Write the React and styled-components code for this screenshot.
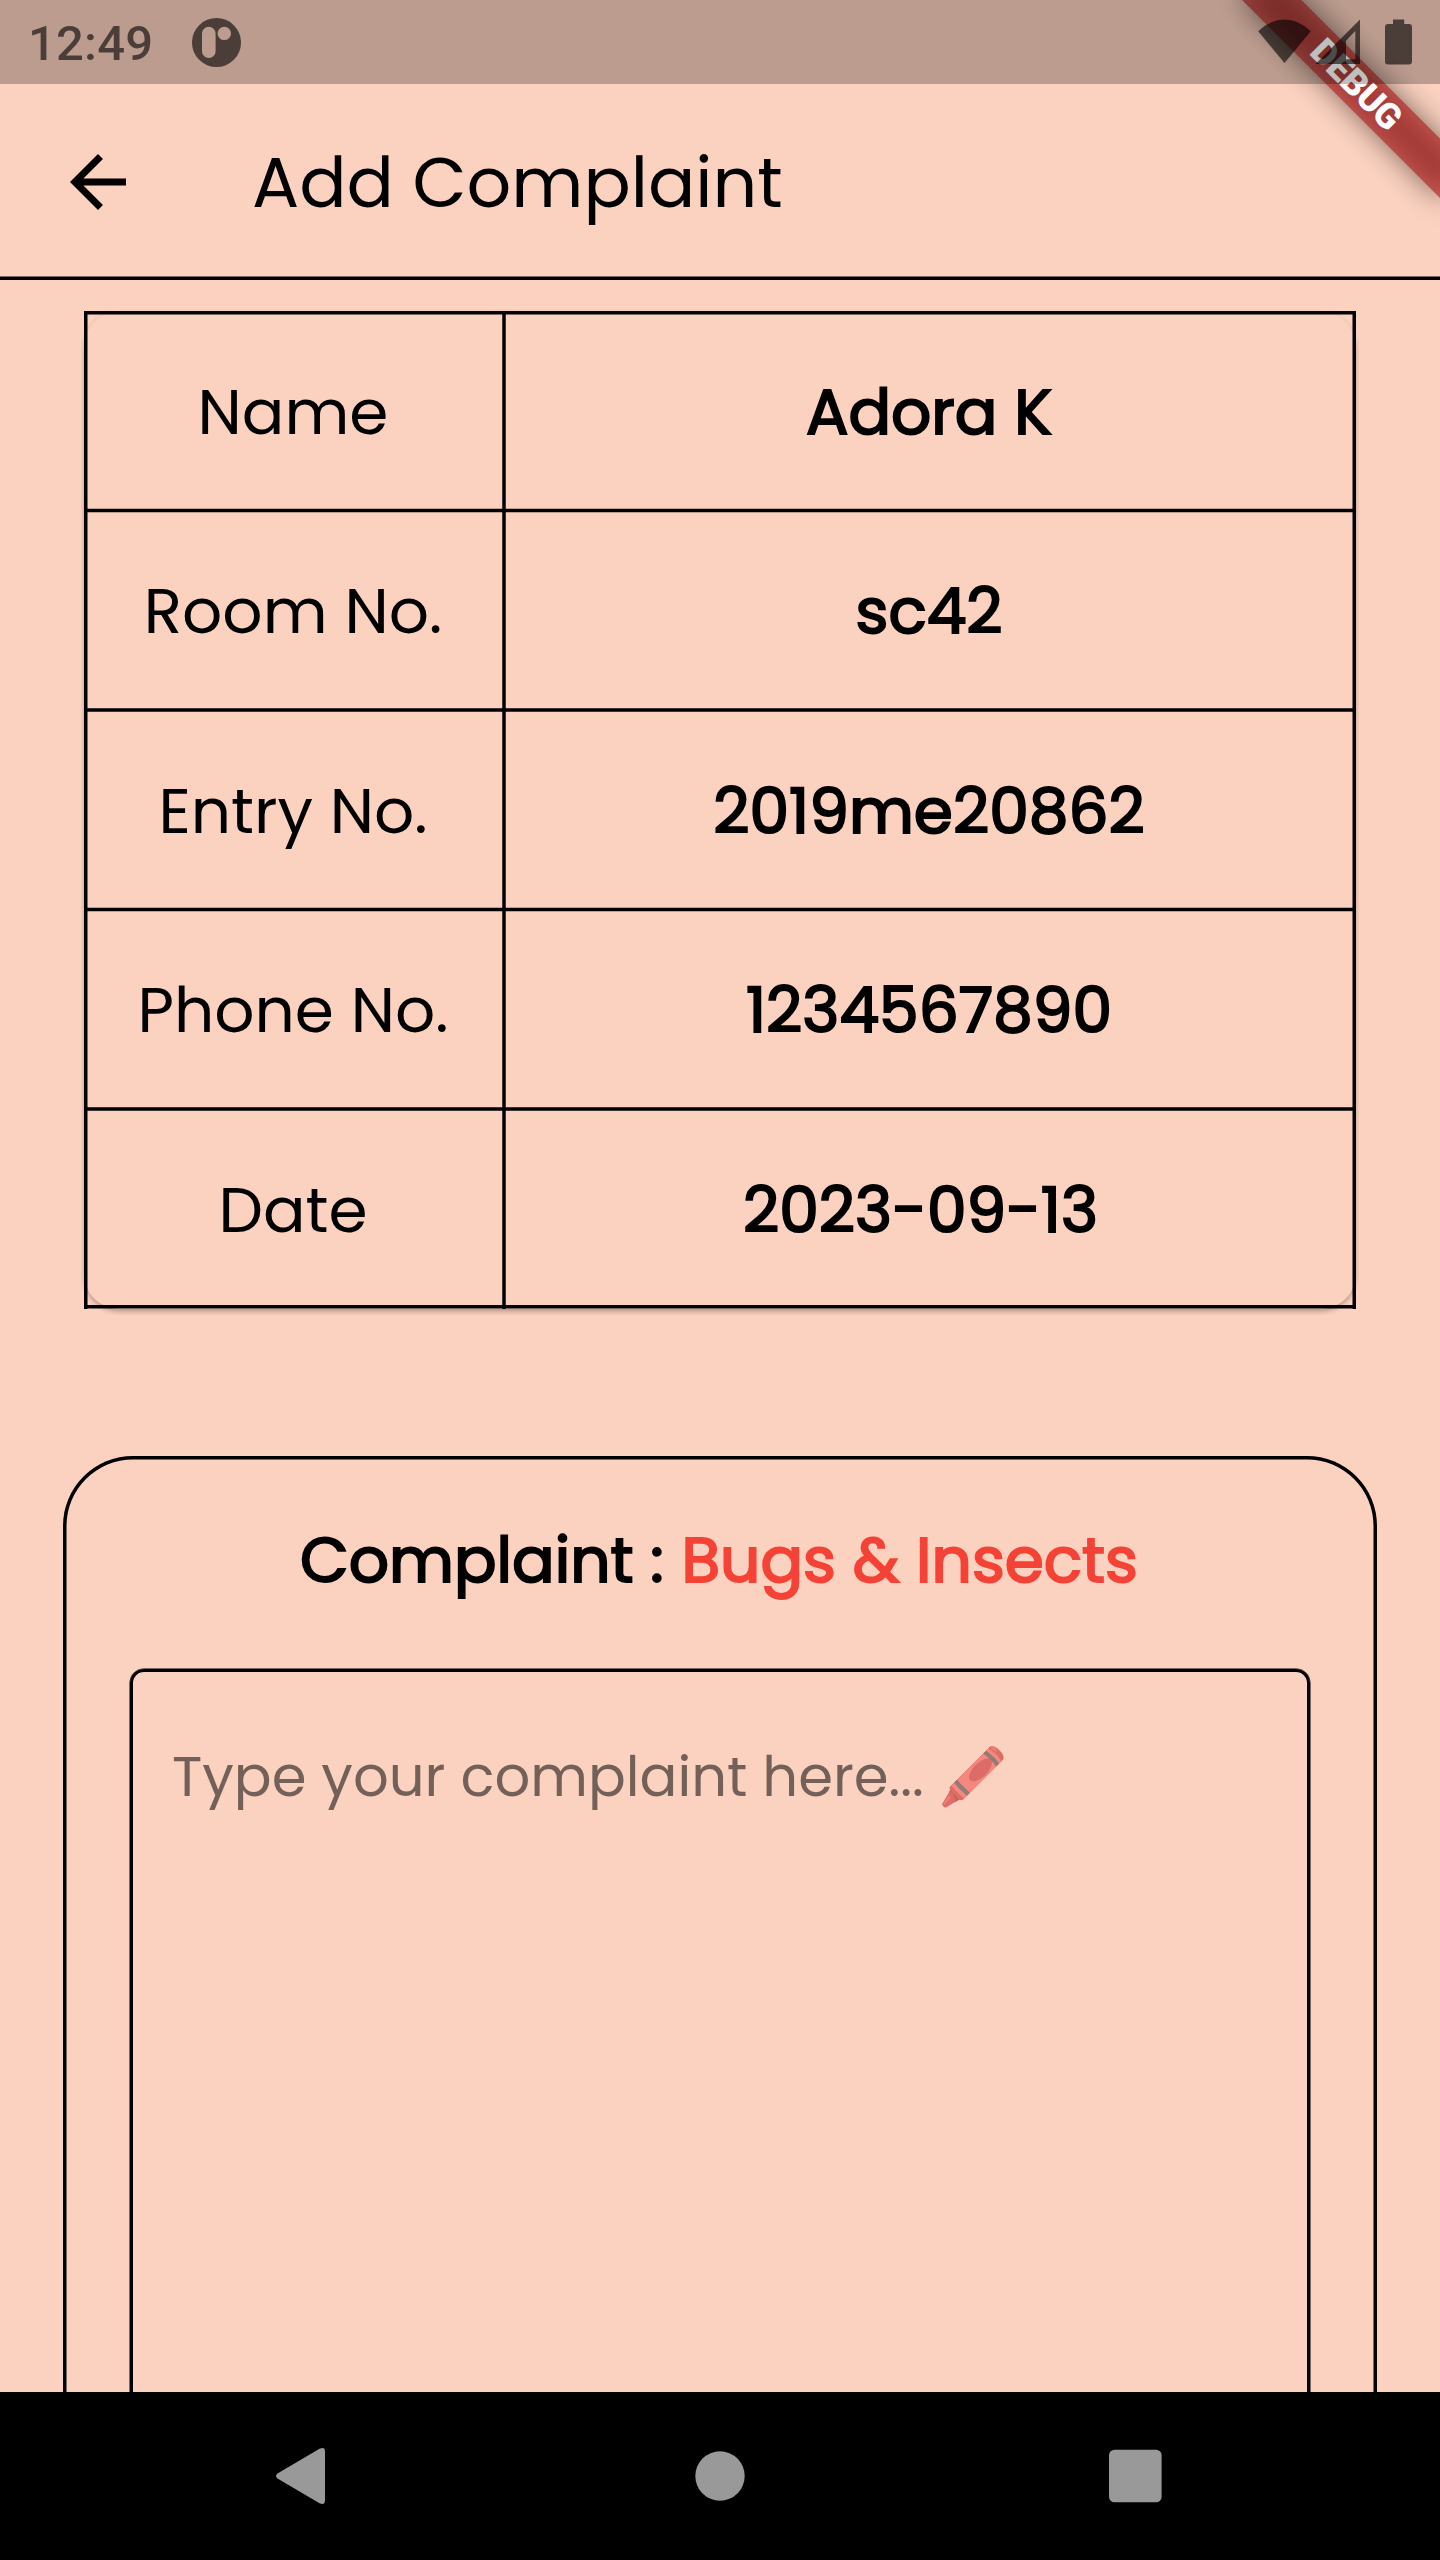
import React from "react";
import styled, { createGlobalStyle } from "styled-components";

const GlobalStyle = createGlobalStyle`
  * { box-sizing: border-box; }
  body { margin: 0; background: #fbd1bf; }
`;

const Screen = styled.div`
  position: relative;
  display: flex;
  flex-direction: column;
  width: 1440px;
  height: 2560px;
  overflow: hidden;
  background: #fbd1bf;
  color: #000;
  font-family: Poppins, Inter, sans-serif;
`;

const StatusBar = styled.div`
  position: relative;
  z-index: 3;
  flex: none;
  display: flex;
  justify-content: space-between;
  height: 84px;
  padding: 0 28px 0 28px;
  background: rgba(0, 0, 0, 0.25);
  color: rgba(0, 0, 0, 0.6);
`;

const StatusGroup = styled.div`
  display: flex;
  gap: ${(p) => p.$gap}px;
`;

const Clock = styled.span`
  width: 126px;
  font: 500 49px/87px Roboto, sans-serif;
  letter-spacing: 0.2px;
`;

const DebugBanner = styled.div`
  position: absolute;
  z-index: 2;
  top: 98px;
  right: -140px;
  width: 280px;
  height: 42px;
  transform: rotate(45deg);
  transform-origin: 140px -98px;

  &::before {
    content: "";
    position: absolute;
    inset: 0;
    background: rgba(0, 0, 0, 0.5);
    filter: blur(13.9px);
  }
`;

const BannerLabel = styled.div`
  position: relative;
  height: 42px;
  padding-left: 1px;
  background: rgba(183, 28, 28, 0.627);
  color: #fff;
  font: 900 35.7px/42px Roboto, sans-serif;
  letter-spacing: -0.5px;
  text-align: center;
`;

const AppBar = styled.header`
  flex: none;
  display: flex;
  align-items: center;
  height: 192px;
  padding: 4px 56px 0;
`;

const BackIcon = styled.svg`
  flex: none;
  width: 84px;
  height: 84px;
`;

const Title = styled.h1`
  margin: 0 0 0 112px;
  font-size: 70px;
  line-height: 105px;
  font-weight: 400;
`;

const Rule = styled.div`
  flex: none;
  height: ${(p) => p.$size}px;
  background: linear-gradient(
    rgba(0, 0, 0, ${(p) => p.$before}) 1px,
    #000 1px calc(100% - 1px),
    rgba(0, 0, 0, ${(p) => p.$after}) calc(100% - 1px)
  );
`;

const Body = styled.main`
  flex: 1;
  min-height: 0;
  overflow: hidden;
  display: flex;
  flex-direction: column;
`;

const DetailsCard = styled.section`
  flex: none;
  margin: 31px 84px 0;
  border-radius: 35px;
  box-shadow: 0 3px 4px rgba(0, 0, 0, 0.24), 0 0 3px rgba(0, 0, 0, 0.06);
`;

/* Column lines run unbroken behind the rows: left edge, divider, right edge. */
const Table = styled.div`
  display: flex;
  flex-direction: column;
  background: linear-gradient(
    90deg,
    #000 3px,
    rgba(0, 0, 0, 0.5) 3px 4px,
    transparent 4px 418px,
    rgba(0, 0, 0, 0.75) 418px 419px,
    #000 419px 421px,
    rgba(0, 0, 0, 0.75) 421px 422px,
    transparent 422px 1268px,
    rgba(0, 0, 0, 0.5) 1268px 1269px,
    #000 1269px
  );
`;

const Row = styled.div`
  display: grid;
  grid-template-columns: 416px 1fr;
  height: ${(p) => p.$h}px;
  padding: 0 4px 0 1px;
`;

const Cell = styled.div`
  padding-top: ${(p) => p.$top}px;
  font-size: 63px;
  line-height: 96px;
  text-align: center;
  white-space: pre;
`;

const ValueCell = styled(Cell)`
  padding-left: 5px;
  -webkit-text-stroke: 2px currentColor;
`;

const ComplaintCard = styled.section`
  flex: none;
  height: 1200px;
  margin: 147px 63px 0;
  padding: 56px 67px;
  border-radius: 70px;
  box-shadow: inset 0 0 0 3.5px #000;
`;

const Heading = styled.h2`
  margin: 0 2px 0 0;
  font-size: 63px;
  line-height: 96px;
  font-weight: 400;
  text-align: center;
  white-space: pre;
  -webkit-text-stroke: 2px currentColor;
`;

const Topic = styled.span`
  margin-left: 1px;
  color: #f44336;
`;

const Field = styled.div`
  height: 960px;
  margin-top: 61px;
  padding: 64px 42px;
  border-radius: 14px;
  box-shadow: inset 0 0 0 3px #000, 0 0 0 0.5px #000;
`;

const Hint = styled.div`
  color: rgba(0, 0, 0, 0.54);
  font-family: Poppins, Inter, "Noto Color Emoji", sans-serif;
  font-size: 56px;
  line-height: 88px;
  white-space: nowrap;
`;

/* The crayon's label is an oval laid over the emoji's barrel. */
const Crayon = styled.span`
  position: relative;
  display: inline-block;
  height: 88px;
  vertical-align: top;
  color: rgba(0, 0, 0, 0.58);

  &::after {
    content: "";
    position: absolute;
    top: 30px;
    left: calc(50% - 8px);
    width: 29px;
    height: 14px;
    border-radius: 50%;
    background: rgba(165, 45, 50, 0.3);
    transform: rotate(-45deg);
  }
`;

const NavBar = styled.nav`
  flex: none;
  display: flex;
  align-items: center;
  gap: 318px;
  height: 168px;
  padding-left: 255px;
  background: #000;
  color: #999;
`;

const NavIcon = styled.svg`
  width: 98px;
  height: 98px;
  fill: currentColor;
`;

const details = [
  { label: "Name", value: "Adora K", h: 193, top: 49 },
  { label: "Room No.", value: "sc42", h: 195, top: 50 },
  { label: "Entry No.", value: "2019me20862", h: 195, top: 51 },
  { label: "Phone No.", value: "1234567890", h: 195, top: 50 },
  { label: "Date", value: "2023-09-13 ", h: 194, top: 51 },
];

function DetailsTable() {
  return (
    <DetailsCard>
      <Table>
        <Rule $size={4} $before={1} $after={0.5} />
        {details.map((d, i) => (
          <React.Fragment key={d.label}>
            {i > 0 && (
              <Rule
                $size={i % 2 ? 5 : 4}
                $before={i % 2 ? 0.25 : 0.75}
                $after={i % 2 ? 0.25 : 0.75}
              />
            )}
            <Row $h={d.h}>
              <Cell $top={d.top}>{d.label}</Cell>
              <ValueCell $top={d.top}>{d.value}</ValueCell>
            </Row>
          </React.Fragment>
        ))}
        <Rule $size={4} $before={1} $after={0.5} />
      </Table>
    </DetailsCard>
  );
}

export default function App() {
  return (
    <Screen>
      <GlobalStyle />
      <StatusBar>
        <StatusGroup $gap={38}>
          <Clock>12:49</Clock>
          <svg width="49" height="84" viewBox="0 0 49 84" fill="currentColor">
            <path
              fillRule="evenodd"
              d="M24.5 18a24.5 24.5 0 1 0 0 49a24.5 24.5 0 1 0 0-49ZM16.8 26.7a6.8 6.8 0 0 1 6.8 6.8V51.3a6.8 6.8 0 0 1-13.6 0V33.5a6.8 6.8 0 0 1 6.8-6.8ZM32.3 26.7a6.7 6.7 0 1 1 0 13.4a6.7 6.7 0 1 1 0-13.4Z"
            />
          </svg>
        </StatusGroup>
        <svg width="154" height="84" viewBox="1258 0 154 84" fill="currentColor">
          <path d="M1258.2 31.3Q1270 19.5 1284.5 19.5T1310.8 31.3L1284.5 63Z" />
          <path
            fillRule="evenodd"
            d="M1360 19.5V64H1315.5ZM1355.3 31L1346 40.7V59.3H1355.3Z"
          />
          <path d="M1393 19.5H1404.2V24H1409a3 3 0 0 1 3 3V61.5a3 3 0 0 1-3 3H1388a3 3 0 0 1-3-3V27a3 3 0 0 1 3-3H1393Z" />
        </svg>
      </StatusBar>

      <DebugBanner>
        <BannerLabel>DEBUG</BannerLabel>
      </DebugBanner>

      <AppBar>
        <BackIcon viewBox="0 0 24 24">
          <path d="M20 11H7.83l5.59-5.59L12 4l-8 8 8 8 1.41-1.41L7.83 13H20v-2z" />
        </BackIcon>
        <Title>Add Complaint</Title>
      </AppBar>
      <Rule $size={4} $before={0.5} $after={1} />

      <Body>
        <DetailsTable />
        <ComplaintCard>
          <Heading>
            Complaint : <Topic>Bugs &amp; Insects</Topic>
          </Heading>
          <Field>
            <Hint>
              Type your complaint here... <Crayon>🖍️</Crayon>
            </Hint>
          </Field>
        </ComplaintCard>
      </Body>

      <NavBar>
        <NavIcon viewBox="0 0 98 98">
          <path d="M22.5 46.5L64.5 21.7Q70 19.5 70 24.5V73.5Q70 78.5 64.5 76.3L22.5 51.5Q19.5 49 22.5 46.5Z" />
        </NavIcon>
        <NavIcon viewBox="0 0 98 98">
          <circle cx="49" cy="49" r="24.7" />
        </NavIcon>
        <NavIcon viewBox="0 0 98 98">
          <rect x="22" y="22.7" width="52.6" height="52.6" rx="5.5" />
        </NavIcon>
      </NavBar>
    </Screen>
  );
}
